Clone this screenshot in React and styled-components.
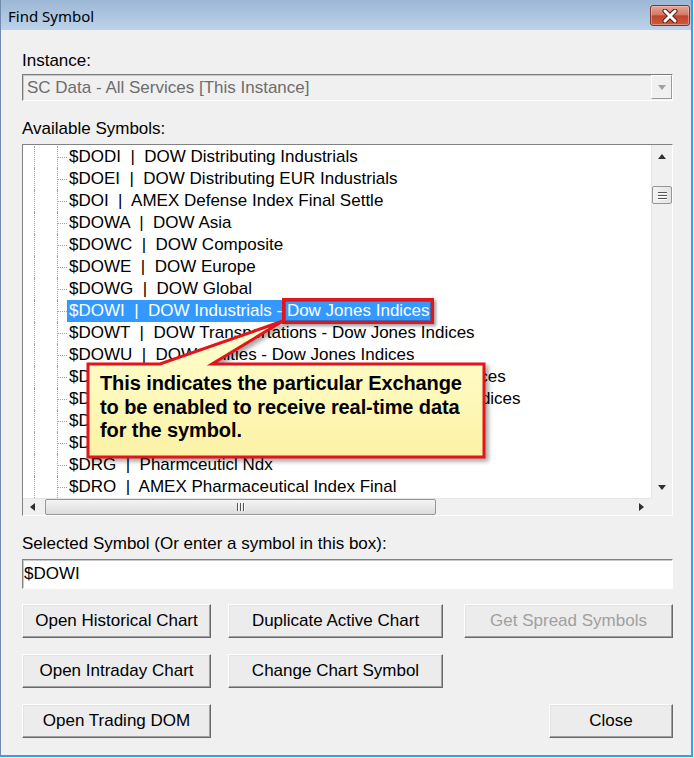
import React from 'react';
import styled, { createGlobalStyle } from 'styled-components';

const GlobalStyle = createGlobalStyle`
  html, body { margin: 0; padding: 0; background: #ffffff; }
  body { font-family: "Liberation Sans", Arial, sans-serif; }
  * { box-sizing: border-box; }
`;

const Window = styled.div`
  width: 693px;
  height: 757px;
  display: flex;
  flex-direction: column;
  background: #f0f0f0;
  border-left: 1px solid #6f8cae;
  border-right: 2px solid #33a1e2;
  border-bottom: 2px solid #33a1e2;
  overflow: hidden;
`;

const TitleBar = styled.div`
  height: 30px;
  flex: none;
  display: flex;
  align-items: center;
  justify-content: space-between;
  padding: 0 1px 0 7px;
  background: linear-gradient(#9cb6d5, #bcd3ea);
`;

const Title = styled.div`
  font-family: "Noto Sans", "Open Sans", sans-serif;
  font-size: 15px;
  color: #000;
  margin-top: 1px;
`;

const CloseButton = styled.div`
  width: 40px;
  height: 21px;
  margin-top: 1px;
  border: 1px solid #7d3528;
  border-radius: 3px;
  background: linear-gradient(#e6a596 0%, #d47a66 45%, #c0442b 52%, #c95a40 100%);
  box-shadow: inset 0 0 0 1px rgba(255, 210, 200, 0.45);
  display: flex;
  align-items: center;
  justify-content: center;
`;

const Client = styled.div`
  flex: 1;
  display: flex;
  flex-direction: column;
  padding: 0 18px 0 21px;
`;

const Label = styled.div`
  font-size: 17px;
  line-height: 20px;
  height: 20px;
  color: #000;
  margin-top: ${(p) => p.$mt}px;
`;

const Combo = styled.div`
  margin-top: 3px;
  height: 27px;
  display: flex;
  border: 1px solid;
  border-color: #7b7b7b #ffffff #ffffff #7b7b7b;
  box-shadow: inset 1px 1px 0 #c8c8c8;
  background: #f0f0f0;
`;

const ComboText = styled.div`
  flex: 1;
  padding-left: 4px;
  font-size: 17px;
  line-height: 26px;
  color: #6d6d6d;
`;

const ComboButton = styled.div`
  width: 21px;
  margin: 0 0 1px 0;
  border: 1px solid;
  border-color: #ffffff #9a9a9a #9a9a9a #ffffff;
  background: #f0f0f0;
  display: flex;
  align-items: center;
  justify-content: center;
`;

const Triangle = styled.div`
  width: 0;
  height: 0;
  border-style: solid;
  border-color: transparent;
  ${(p) => p.$dir === 'down' && `border-width: 5px 4.5px 0 4.5px; border-top-color: ${p.$c};`}
  ${(p) => p.$dir === 'up' && `border-width: 0 4.5px 5px 4.5px; border-bottom-color: ${p.$c};`}
  ${(p) => p.$dir === 'left' && `border-width: 4.5px 5px 4.5px 0; border-right-color: ${p.$c};`}
  ${(p) => p.$dir === 'right' && `border-width: 4.5px 0 4.5px 5px; border-left-color: ${p.$c};`}
`;

const TreeBox = styled.div`
  position: relative;
  margin-top: 5px;
  height: 372px;
  border: 1px solid;
  border-color: #828282 #ffffff #ffffff #828282;
  background: #ffffff;
  display: grid;
  grid-template-columns: 1fr 21px;
  grid-template-rows: 1fr 17px;
`;

const TreeList = styled.div`
  overflow: hidden;
  padding-top: 1px;
`;

const TreeRow = styled.div`
  display: flex;
  height: 22px;
`;

const Indent = styled.div`
  flex: none;
  width: ${(p) => p.$w}px;
  border-left: ${(p) => (p.$line ? '1px dotted #a0a0a0' : 'none')};
`;

const Branch = styled.div`
  flex: none;
  width: 10px;
  border-left: 1px dotted #a0a0a0;
  background: repeating-linear-gradient(to right, #a0a0a0 0 1px, transparent 1px 2px) left 11px / 100% 1px no-repeat;
`;

const ItemLabel = styled.div`
  padding: 0 2px;
  font-size: 17px;
  line-height: 22px;
  white-space: pre;
  color: ${(p) => (p.$sel ? '#ffffff' : '#000000')};
  background: ${(p) => (p.$sel ? '#3399ff' : 'transparent')};
`;

const VScroll = styled.div`
  display: flex;
  flex-direction: column;
  background: #f0f0f0;
  border-left: 1px solid #e4e4e4;
`;

const ScrollArrow = styled.div`
  flex: none;
  width: ${(p) => p.$w || '100%'};
  height: ${(p) => p.$h || '100%'};
  display: flex;
  align-items: center;
  justify-content: center;
`;

const VThumb = styled.div`
  margin: 19px 0 0 0;
  height: 18px;
  border: 1px solid #979797;
  border-radius: 2px;
  background: linear-gradient(to right, #f4f4f4, #e2e2e2);
  display: flex;
  flex-direction: column;
  align-items: center;
  justify-content: center;
  gap: 2px;
`;

const GripH = styled.div`
  width: 9px;
  height: 1px;
  background: #555;
  box-shadow: 0 1px 0 #fff;
`;

const Spacer = styled.div`
  flex: 1;
`;

const HScroll = styled.div`
  display: flex;
  align-items: stretch;
  background: #f0f0f0;
  border-top: 1px solid #e4e4e4;
`;

const HThumb = styled.div`
  margin-left: 4px;
  width: 391px;
  border: 1px solid #979797;
  border-radius: 2px;
  background: linear-gradient(#f4f4f4, #dcdcdc);
  display: flex;
  align-items: center;
  justify-content: center;
  gap: 2px;
`;

const GripV = styled.div`
  width: 1px;
  height: 8px;
  background: #555;
  box-shadow: 1px 0 0 #fff;
`;

const Corner = styled.div`
  background: #f0f0f0;
`;

const CalloutShape = styled.svg`
  position: absolute;
  left: 0;
  top: 0;
  width: 100%;
  height: 100%;
  overflow: visible;
  pointer-events: none;
  filter: drop-shadow(3px 3px 2px rgba(0, 0, 0, 0.35));
`;

const CalloutText = styled.div`
  position: absolute;
  left: 77px;
  top: 227px;
  font-size: 20px;
  font-weight: bold;
  line-height: 23.5px;
  letter-spacing: -0.1px;
  color: #000;
  white-space: nowrap;
`;

const Highlight = styled.div`
  position: absolute;
  left: 259px;
  top: 153px;
  width: 152px;
  height: 26px;
  border: 3px solid #e5141a;
  box-shadow: 2px 2px 3px rgba(0, 0, 0, 0.4), inset 0 0 0 1px rgba(120, 0, 0, 0.35);
`;

const TextBox = styled.div`
  margin-top: 5px;
  height: 30px;
  border: 1px solid;
  border-color: #828282 #ffffff #ffffff #828282;
  box-shadow: inset 1px 1px 0 #c8c8c8;
  background: #ffffff;
  padding-left: 1px;
  font-size: 17px;
  line-height: 28px;
  color: #000;
`;

const ButtonRow = styled.div`
  display: flex;
  gap: 17px;
  margin-top: ${(p) => p.$mt}px;
`;

const Button = styled.div`
  width: ${(p) => p.$w}px;
  height: 34px;
  margin-left: ${(p) => (p.$right ? 'auto' : '0')};
  border: 1px solid;
  border-color: #ffffff #696969 #696969 #ffffff;
  box-shadow: inset -1px -1px 0 #a0a0a0, inset 1px 1px 0 #e3e3e3;
  background: #ececec;
  display: flex;
  align-items: center;
  justify-content: center;
  font-size: 17px;
  color: ${(p) => (p.$disabled ? '#a0a0a0' : '#000000')};
`;

const rows = [
  ['$DODI', 'DOW Distributing Industrials'],
  ['$DOEI', 'DOW Distributing EUR Industrials'],
  ['$DOI', 'AMEX Defense Index Final Settle'],
  ['$DOWA', 'DOW Asia'],
  ['$DOWC', 'DOW Composite'],
  ['$DOWE', 'DOW Europe'],
  ['$DOWG', 'DOW Global'],
  ['$DOWI', 'DOW Industrials - Dow Jones Indices', true],
  ['$DOWT', 'DOW Transportations - Dow Jones Indices'],
  ['$DOWU', 'DOW Utilities - Dow Jones Indices'],
  ['$DOWTR', 'DOW Transportation TR - Dow Jones Indices'],
  ['$DOWUT', 'DOW Utilities Total Return - Dow Jones Indices'],
  ['$DPM', 'Precious Metals Index'],
  ['$DRB', 'Retail Index'],
  ['$DRG', 'Pharmceuticl Ndx'],
  ['$DRO', 'AMEX Pharmaceutical Index Final'],
];

function CloseGlyph() {
  return (
    <svg width="16" height="14" viewBox="0 0 16 14">
      <path d="M3 2 L13 12 M13 2 L3 12" stroke="#5b1b10" strokeWidth="5" strokeLinecap="round" />
      <path d="M3 2 L13 12 M13 2 L3 12" stroke="#ffffff" strokeWidth="3" strokeLinecap="round" />
    </svg>
  );
}

export default function App() {
  return (
    <>
      <GlobalStyle />
      <Window>
        <TitleBar>
          <Title>Find Symbol</Title>
          <CloseButton>
            <CloseGlyph />
          </CloseButton>
        </TitleBar>
        <Client>
          <Label $mt={21}>Instance:</Label>
          <Combo>
            <ComboText>SC Data - All Services [This Instance]</ComboText>
            <ComboButton>
              <Triangle $dir="down" $c="#a0a0a0" />
            </ComboButton>
          </Combo>
          <Label $mt={18}>Available Symbols:</Label>
          <TreeBox>
            <TreeList>
              {rows.map(([sym, desc, sel]) => (
                <TreeRow key={sym}>
                  <Indent $w={11} />
                  <Indent $w={23} $line />
                  <Branch />
                  <ItemLabel $sel={sel}>{`${sym}  |  ${desc}`}</ItemLabel>
                </TreeRow>
              ))}
            </TreeList>
            <VScroll>
              <ScrollArrow $h="22px">
                <Triangle $dir="up" $c="#303030" />
              </ScrollArrow>
              <VThumb>
                <GripH />
                <GripH />
                <GripH />
              </VThumb>
              <Spacer />
              <ScrollArrow $h="22px">
                <Triangle $dir="down" $c="#303030" />
              </ScrollArrow>
            </VScroll>
            <HScroll>
              <ScrollArrow $w="18px">
                <Triangle $dir="left" $c="#303030" />
              </ScrollArrow>
              <HThumb>
                <GripV />
                <GripV />
                <GripV />
              </HThumb>
              <Spacer />
              <ScrollArrow $w="20px">
                <Triangle $dir="right" $c="#303030" />
              </ScrollArrow>
            </HScroll>
            <Corner />
            <Highlight />
            <CalloutShape>
              <defs>
                <linearGradient id="calloutFill" x1="0" y1="0" x2="0" y2="1">
                  <stop offset="0" stopColor="#ffffd2" />
                  <stop offset="1" stopColor="#fcf2a6" />
                </linearGradient>
              </defs>
              <path
                d="M65 219 L137 219 L260 176 L189 219 L461 219 L461 312 L65 312 Z"
                fill="url(#calloutFill)"
                stroke="#e5141a"
                strokeWidth="3"
                strokeLinejoin="miter"
              />
            </CalloutShape>
            <CalloutText>
              This indicates the particular Exchange
              <br />
              to be enabled to receive real-time data
              <br />
              for the symbol.
            </CalloutText>
          </TreeBox>
          <Label $mt={18}>Selected Symbol (Or enter a symbol in this box):</Label>
          <TextBox>$DOWI</TextBox>
          <ButtonRow $mt={15}>
            <Button $w={189}>Open Historical Chart</Button>
            <Button $w={215}>Duplicate Active Chart</Button>
            <Button $w={209} $right $disabled>Get Spread Symbols</Button>
          </ButtonRow>
          <ButtonRow $mt={16}>
            <Button $w={189}>Open Intraday Chart</Button>
            <Button $w={215}>Change Chart Symbol</Button>
          </ButtonRow>
          <ButtonRow $mt={16}>
            <Button $w={189}>Open Trading DOM</Button>
            <Button $w={124} $right>Close</Button>
          </ButtonRow>
        </Client>
      </Window>
    </>
  );
}
